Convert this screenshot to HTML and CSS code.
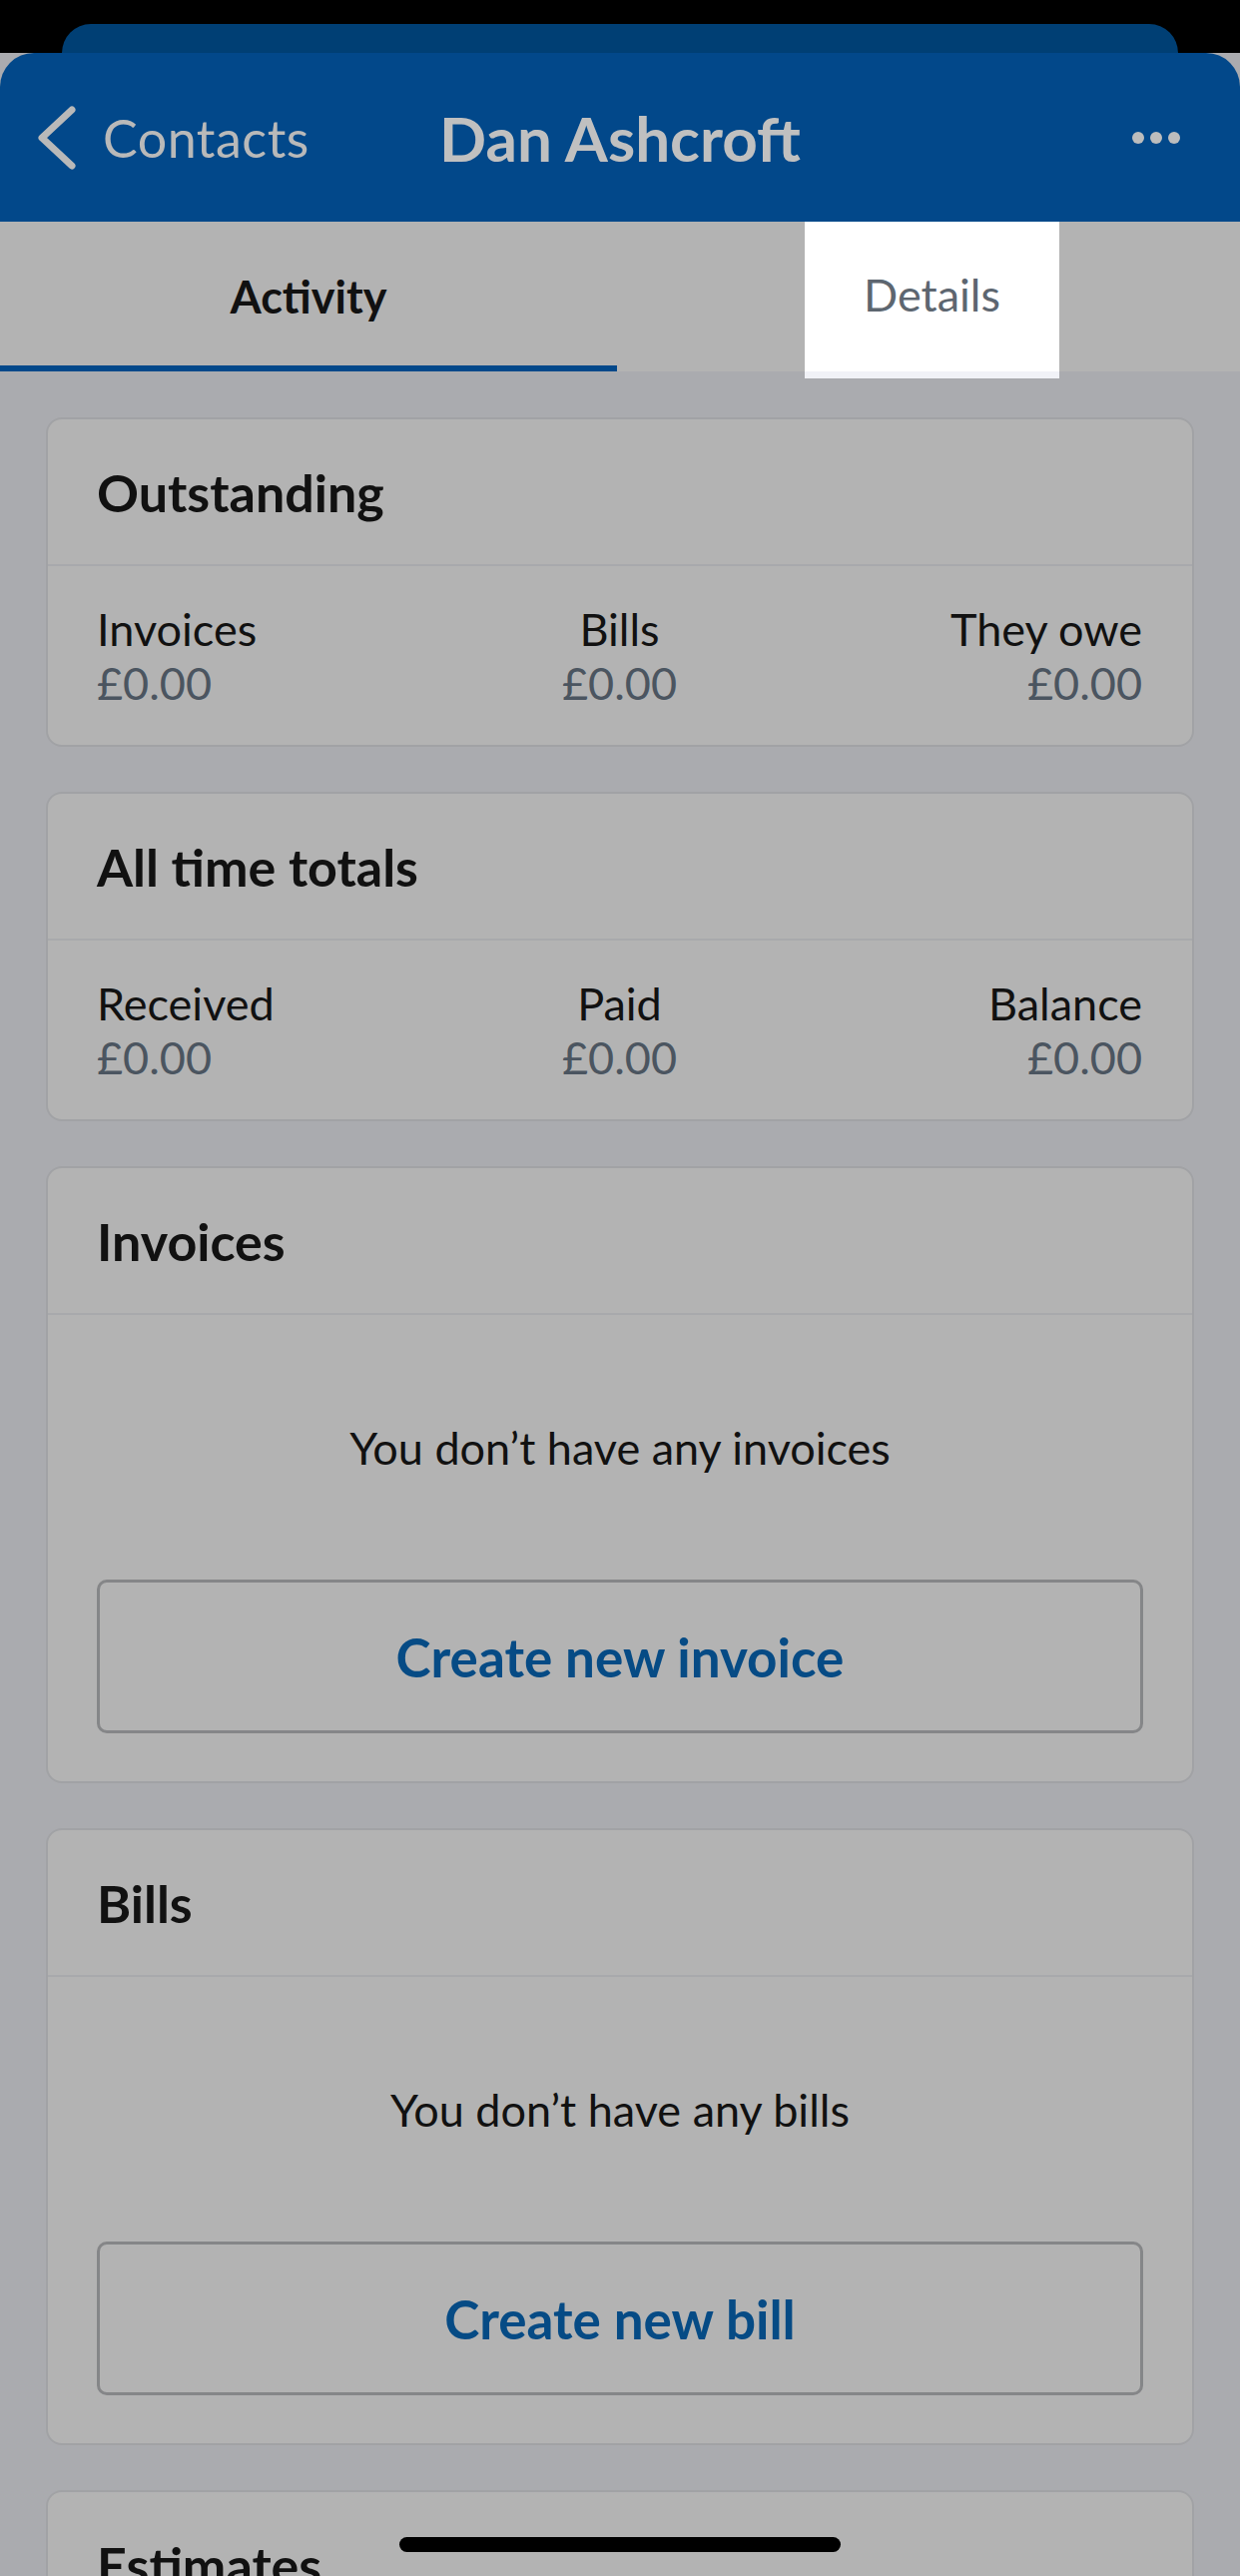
FILE: index.html
```html
<!DOCTYPE html>
<html lang="en">
<head>
<meta charset="utf-8">
<title>Dan Ashcroft</title>
<link rel="stylesheet" href="styles.css">
</head>
<body>
<div class="screen">
  <div class="top">
    <div class="back-sheet"></div>
  </div>
  <header class="navbar">
    <div class="nav-back">
      <svg class="chevron" width="40" height="64" viewBox="0 0 40 64"><path d="M35 4 L5 32 L35 60" fill="none" stroke="#b9b9b9" stroke-width="7" stroke-linecap="round" stroke-linejoin="round"/></svg>
      <span class="nav-back-label">Contacts</span>
    </div>
    <h1 class="nav-title">Dan Ashcroft</h1>
    <div class="nav-more"><span class="dot"></span><span class="dot"></span><span class="dot"></span></div>
  </header>
  <nav class="tabs">
    <div class="tab tab-active">Activity</div>
    <div class="tab">Details</div>
    <div class="tab-highlight"><span>Details</span></div>
  </nav>
  <main class="content">
    <section class="card">
      <div class="card-head">Outstanding</div>
      <div class="card-stats">
        <div class="stat"><div class="stat-label">Invoices</div><div class="stat-value">£0.00</div></div>
        <div class="stat stat-center"><div class="stat-label">Bills</div><div class="stat-value">£0.00</div></div>
        <div class="stat stat-right"><div class="stat-label">They owe</div><div class="stat-value">£0.00</div></div>
      </div>
    </section>
    <section class="card">
      <div class="card-head">All time totals</div>
      <div class="card-stats">
        <div class="stat"><div class="stat-label">Received</div><div class="stat-value">£0.00</div></div>
        <div class="stat stat-center"><div class="stat-label">Paid</div><div class="stat-value">£0.00</div></div>
        <div class="stat stat-right"><div class="stat-label">Balance</div><div class="stat-value">£0.00</div></div>
      </div>
    </section>
    <section class="card">
      <div class="card-head">Invoices</div>
      <div class="card-empty">
        <p class="empty-text">You don’t have any invoices</p>
        <button class="btn-outline">Create new invoice</button>
      </div>
    </section>
    <section class="card">
      <div class="card-head">Bills</div>
      <div class="card-empty">
        <p class="empty-text">You don’t have any bills</p>
        <button class="btn-outline">Create new bill</button>
      </div>
    </section>
    <section class="card">
      <div class="card-head">Estimates</div>
    </section>
  </main>
  <div class="home-indicator"></div>
</div>
</body>
</html>
```

FILE: styles.css
```css
* { box-sizing: border-box; }
html, body { margin: 0; padding: 0; }
body {
  background: #aaabaf;
  font-family: Lato, "Open Sans", sans-serif;
  color: #111;
}
.screen {
  position: relative;
  width: 1242px;
  height: 2580px;
  overflow: hidden;
  background: #aaabaf;
}
.top {
  height: 53px;
  background: #000;
  padding: 24px 62px 0 62px;
}
.back-sheet {
  height: 29px;
  background: #003f74;
  border-radius: 34px 34px 0 0;
}
.navbar {
  height: 169px;
  background: #02488a;
  border-radius: 34px 34px 0 0;
  display: flex;
  align-items: center;
  justify-content: space-between;
  padding: 0 60px 0 40px;
  position: relative;
}
.nav-back {
  display: flex;
  align-items: center;
  gap: 26px;
  color: #b9b9b9;
}
.chevron { display: block; margin-left: -3px; }
.nav-back-label {
  font-size: 52px;
  font-weight: 400;
  letter-spacing: 0.5px;
}
.nav-title {
  position: absolute;
  left: 0;
  right: 0;
  margin: 0;
  text-align: center;
  font-size: 62px;
  font-weight: 700;
  color: #c0c0c0;
  pointer-events: none;
}
.nav-more {
  display: flex;
  gap: 6px;
  align-items: center;
}
.dot {
  width: 12px;
  height: 12px;
  border-radius: 50%;
  background: #bdbdbd;
}
.tabs {
  position: relative;
  height: 150px;
  background: #b3b3b3;
  display: grid;
  grid-template-columns: 618px 1fr;
}
.tab {
  display: flex;
  align-items: center;
  justify-content: center;
  font-size: 45px;
  color: #5d6670;
}
.tab-active {
  color: #111;
  font-weight: 700;
  border-bottom: 6px solid #02488a;
  padding-top: 6px;
}
.tab-highlight {
  position: absolute;
  left: 806px;
  top: 0;
  width: 255px;
  height: 157px;
  background: #fff;
  border-bottom: 7px solid #f1f2f7;
  display: flex;
  align-items: center;
  justify-content: center;
  font-size: 45px;
  color: #5d6670;
}
.tab-highlight span { margin-top: -4px; }
.content {
  padding: 46px 46px 0 46px;
  display: flex;
  flex-direction: column;
  gap: 45px;
}
.card {
  background: #b3b3b3;
  border: 2px solid #a1a2a5;
  border-radius: 16px;
}
.card-head {
  height: 147px;
  border-bottom: 2px solid #a8a9ac;
  display: flex;
  align-items: center;
  padding: 0 49px;
  font-size: 52px;
  font-weight: 700;
  color: #111;
}
.card-stats {
  height: 179px;
  display: grid;
  grid-template-columns: 1fr 1fr 1fr;
  align-content: center;
  padding: 0 50px 0 49px;
}
.stat {
  font-size: 45px;
  line-height: 54px;
}
.stat-center { text-align: center; }
.stat-right { text-align: right; }
.stat-label { color: #111; }
.stat-value { color: #4b5560; }
.card-empty {
  padding: 106px 49px 48px 49px;
  display: flex;
  flex-direction: column;
  align-items: stretch;
}
.empty-text {
  margin: 0;
  text-align: center;
  font-size: 45px;
  line-height: 54px;
  color: #111;
}
.btn-outline {
  margin-top: 105px;
  height: 154px;
  border: 3px solid #858688;
  border-radius: 10px;
  background: transparent;
  font-family: Lato, "Open Sans", sans-serif;
  font-size: 53px;
  font-weight: 700;
  color: #064b85;
}
.home-indicator {
  position: absolute;
  left: 400px;
  top: 2541px;
  width: 442px;
  height: 15px;
  border-radius: 8px;
  background: #000;
}
```
